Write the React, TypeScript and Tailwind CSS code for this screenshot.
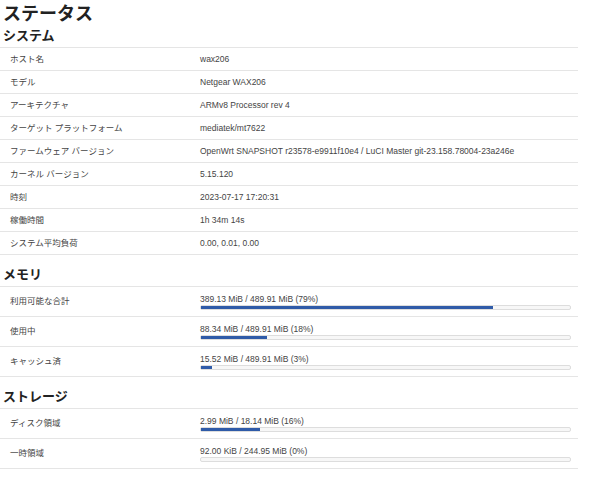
export default function App() {
  const sys = [
    ["ホスト名", "wax206"],
    ["モデル", "Netgear WAX206"],
    ["アーキテクチャ", "ARMv8 Processor rev 4"],
    ["ターゲット プラットフォーム", "mediatek/mt7622"],
    ["ファームウェア バージョン", "OpenWrt SNAPSHOT r23578-e9911f10e4 / LuCI Master git-23.158.78004-23a246e"],
    ["カーネル バージョン", "5.15.120"],
    ["時刻", "2023-07-17 17:20:31"],
    ["稼働時間", "1h 34m 14s"],
    ["システム平均負荷", "0.00, 0.01, 0.00"],
  ];
  const mem = [
    ["利用可能な合計", "389.13 MiB / 489.91 MiB (79%)", 79],
    ["使用中", "88.34 MiB / 489.91 MiB (18%)", 18],
    ["キャッシュ済", "15.52 MiB / 489.91 MiB (3%)", 3],
  ] as const;
  const sto = [
    ["ディスク領域", "2.99 MiB / 18.14 MiB (16%)", 16],
    ["一時領域", "92.00 KiB / 244.95 MiB (0%)", 0],
  ] as const;
  const font = { fontFamily: '"Liberation Sans", "Noto Sans CJK JP", sans-serif' };
  const Bar = ({ rows }: { rows: readonly (readonly [string, string, number])[] }) => (
    <div className="border-t border-[#e5e5e5]">
      {rows.map(([k, v, p]) => (
        <div key={k} className="flex h-[30px] items-center border-b border-[#e5e5e5]">
          <div className="w-[200px] pl-[10px] text-[#444]">{k}</div>
          <div className="flex-1 pr-[7px]">
            <div className="leading-[10px] text-[#444]">{v}</div>
            <div className="mt-[1px] h-[5px] rounded-[2px] border border-[#ddd] bg-[#f7f7f7]">
              <div className="h-full bg-[#2f5ba8]" style={{ width: `${p}%` }} />
            </div>
          </div>
        </div>
      ))}
    </div>
  );
  return (
    <div className="w-[596px] h-[482px] bg-white pr-[18px] text-[8.5px] text-[#333]" style={font}>
      <div className="pl-[3px] pt-[3px] text-[18px] font-bold leading-[22px] text-[#222]">ステータス</div>
      <div className="pl-[3px] text-[13px] font-bold leading-[22px] text-[#222]">システム</div>
      <div className="border-t border-[#e5e5e5]">
        {sys.map(([k, v]) => (
          <div key={k} className="flex h-[23px] items-center border-b border-[#e5e5e5] text-[#444]">
            <div className="w-[200px] pl-[10px]">{k}</div>
            <div>{v}</div>
          </div>
        ))}
      </div>
      <div className="pl-[3px] pt-[9px] text-[13px] font-bold leading-[22px] text-[#222]">メモリ</div>
      <Bar rows={mem} />
      <div className="pl-[3px] pt-[9px] text-[13px] font-bold leading-[22px] text-[#222]">ストレージ</div>
      <Bar rows={sto} />
    </div>
  );
}
